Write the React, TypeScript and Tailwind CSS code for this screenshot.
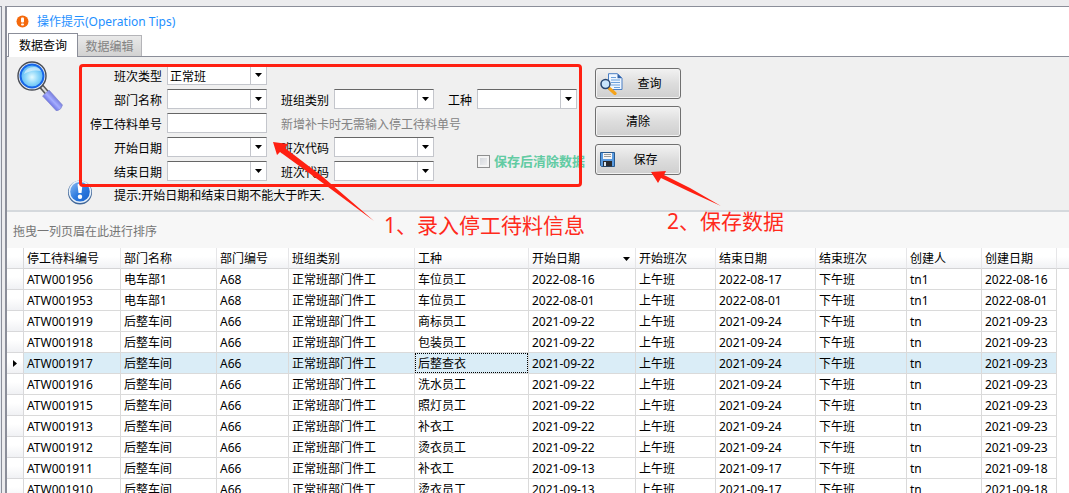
import { useState } from "react"
import type { ReactNode } from "react"

interface RecordRow {
    code: string
    dept: string
    deptNo: string
    group: string
    job: string
    startDate: string
    startShift: string
    endDate: string
    endShift: string
    creator: string
    createdAt: string
}

const columns: { key: keyof RecordRow; title: string; width: string }[] = [
    { key: "code", title: "停工待料编号", width: "w-[97px]" },
    { key: "dept", title: "部门名称", width: "w-[96px]" },
    { key: "deptNo", title: "部门编号", width: "w-[72px]" },
    { key: "group", title: "班组类别", width: "w-[126px]" },
    { key: "job", title: "工种", width: "w-[114px]" },
    { key: "startDate", title: "开始日期", width: "w-[107px]" },
    { key: "startShift", title: "开始班次", width: "w-[80px]" },
    { key: "endDate", title: "结束日期", width: "w-[100px]" },
    { key: "endShift", title: "结束班次", width: "w-[91px]" },
    { key: "creator", title: "创建人", width: "w-[75px]" },
    { key: "createdAt", title: "创建日期", width: "w-[75px]" },
]

function row(code: string, dept: string, deptNo: string, job: string, startDate: string, endDate: string, creator: string, createdAt: string): RecordRow {
    return { code, dept, deptNo, group: "正常班部门件工", job, startDate, startShift: "上午班", endDate, endShift: "下午班", creator, createdAt }
}

const records: RecordRow[] = [
    row("ATW001956", "电车部1", "A68", "车位员工", "2022-08-16", "2022-08-17", "tn1", "2022-08-16"),
    row("ATW001953", "电车部1", "A68", "车位员工", "2022-08-01", "2022-08-01", "tn1", "2022-08-01"),
    row("ATW001919", "后整车间", "A66", "商标员工", "2021-09-22", "2021-09-24", "tn", "2021-09-23"),
    row("ATW001918", "后整车间", "A66", "包装员工", "2021-09-22", "2021-09-24", "tn", "2021-09-23"),
    row("ATW001917", "后整车间", "A66", "后整查衣", "2021-09-22", "2021-09-24", "tn", "2021-09-23"),
    row("ATW001916", "后整车间", "A66", "洗水员工", "2021-09-22", "2021-09-24", "tn", "2021-09-23"),
    row("ATW001915", "后整车间", "A66", "照灯员工", "2021-09-22", "2021-09-24", "tn", "2021-09-23"),
    row("ATW001913", "后整车间", "A66", "补衣工", "2021-09-22", "2021-09-24", "tn", "2021-09-23"),
    row("ATW001912", "后整车间", "A66", "烫衣员工", "2021-09-22", "2021-09-24", "tn", "2021-09-23"),
    row("ATW001911", "后整车间", "A66", "补衣工", "2021-09-13", "2021-09-17", "tn", "2021-09-18"),
    row("ATW001910", "后整车间", "A66", "烫衣员工", "2021-09-13", "2021-09-17", "tn", "2021-09-18"),
]

function WarningIcon() {
    return (
        <svg width="13" height="13" viewBox="0 0 13 13" aria-hidden="true">
            <circle cx="6.5" cy="6.5" r="6" fill="#f4690c" />
            <rect x="5" y="2.5" width="3" height="5" rx="1" fill="#fff" />
            <rect x="5" y="8.5" width="3" height="2" rx="1" fill="#fff" />
        </svg>
    )
}

function MagnifierIcon() {
    return (
        <svg width="48" height="50" viewBox="0 0 48 50" aria-hidden="true">
            <defs>
                <radialGradient id="lens" cx="0.5" cy="0.55" r="0.55">
                    <stop offset="0" stopColor="#e4faff" />
                    <stop offset="0.5" stopColor="#8fd8fa" />
                    <stop offset="1" stopColor="#4fb0f2" />
                </radialGradient>
                <linearGradient id="handle" x1="0" y1="1" x2="1" y2="0">
                    <stop offset="0.25" stopColor="#4a4fd0" />
                    <stop offset="0.5" stopColor="#a5adff" />
                    <stop offset="0.8" stopColor="#4d50c0" />
                </linearGradient>
            </defs>
            <path d="M25 25l7 8" stroke="#555" strokeWidth="5" />
            <path d="M26 26l6 7" stroke="#ddd" strokeWidth="2" />
            <path d="M26.500 35l6.500-6L46.500 44q-1 5-6 6z" fill="url(#handle)" stroke="#8286c8" strokeWidth="0.6" />
            <circle cx="16" cy="15" r="14" fill="#e8eef6" stroke="#4a4d55" strokeWidth="1.400" />
            <circle cx="16" cy="15" r="11.500" fill="url(#lens)" stroke="#1766e8" strokeWidth="2" />
            <path d="M8 13q2-7 10-7 5 0 7 4-9-2-17 3z" fill="#fff" opacity="0.5" />
        </svg>
    )
}

function InfoIcon() {
    return (
        <svg width="26" height="26" viewBox="0 0 26 26" aria-hidden="true">
            <defs>
                <linearGradient id="info" x1="0" y1="0" x2="1" y2="1">
                    <stop offset="0" stopColor="#8cbcf2" />
                    <stop offset="0.5" stopColor="#2f7ce0" />
                    <stop offset="1" stopColor="#1560cc" />
                </linearGradient>
            </defs>
            <circle cx="13" cy="13.500" r="12" fill="#3f6699" />
            <circle cx="13" cy="12.800" r="11.300" fill="#e6f0fa" />
            <circle cx="13" cy="12.800" r="9.800" fill="url(#info)" />
            <path d="M10.500 5.500q2.500-2 5 0l-1 8.500h-3z" fill="#fff" />
            <circle cx="13" cy="17.800" r="2.200" fill="#fff" />
        </svg>
    )
}

function SearchDocIcon() {
    return (
        <svg width="23" height="22" viewBox="0 0 23 22" aria-hidden="true">
            <path d="M8.500 0.700h9l4.500 4.500v11.300H8.500z" fill="#eef6ff" stroke="#4a7fc4" />
            <path d="M17.500 0.700v4.500H22z" fill="#2d5fa6" />
            <path d="M11 4.500h5M11 7h9M11 9.500h9M11 12h9M14 14.500h6" stroke="#6ba0dc" />
            <path d="M9.500 15.500l5.500 5" stroke="#f5a31a" strokeWidth="3.200" strokeLinecap="round" />
            <circle cx="5.500" cy="11" r="4.500" fill="#c9e4fa" stroke="#26456f" strokeWidth="1.500" />
        </svg>
    )
}

function SaveIcon() {
    return (
        <svg width="15" height="15" viewBox="0 0 15 15" aria-hidden="true">
            <path d="M0.500 0.500h14v14h-13l-1-1z" fill="#5a9be0" stroke="#27598f" />
            <rect x="3" y="1" width="9" height="6" fill="#f6f6f6" />
            <path d="M4 2.500h7M4 4.500h7" stroke="#999" />
            <rect x="3" y="9" width="9" height="5.500" fill="#2a2c30" />
            <rect x="4" y="10" width="2" height="4" fill="#d8e4f0" />
        </svg>
    )
}

function ActionButton({ icon, children }: { icon?: ReactNode; children: ReactNode }) {
    return (
        <button
            type="button"
            className="flex h-[31px] w-[86px] items-center rounded-[3px] border border-[#707070] bg-linear-to-b from-[#f2f2f2] from-0% via-[#dddddd] via-50% to-[#cfcfcf] px-1 shadow-[inset_0_0_0_1px_#f3f3f3]"
        >
            {icon}
            <span className="flex-1 pt-px text-center">{children}</span>
        </button>
    )
}

interface SelectFieldProps {
    id: string
    label: string
    labelWidth?: string
    options?: string[]
}

function SelectField({ id, label, labelWidth = "", options = [""] }: SelectFieldProps) {
    return (
        <div className="flex h-5 items-center gap-[5px]">
            <label htmlFor={id} className={`${labelWidth} pt-1 text-right whitespace-nowrap`}>{label}</label>
            <div className="relative">
                <select
                    id={id}
                    className="block h-5 w-[100px] appearance-none border border-[#c4c6cc] border-t-[#666] bg-white pt-[3px] pr-4 pl-[2px] leading-4 outline-none"
                >
                    {options.map((o) => <option key={o}>{o}</option>)}
                </select>
                <span className="pointer-events-none absolute inset-y-px right-px flex w-4 items-center justify-center border-l border-[#c4c6cc]">
                    <svg width="7" height="4" viewBox="0 0 7 4" aria-hidden="true">
                        <path d="M0 0h7L3.500 4z" fill="#000" />
                    </svg>
                </span>
            </div>
        </div>
    )
}

// red frame, arrows and captions that explain the two steps
function Annotations() {
    return (
        <div className="pointer-events-none absolute inset-0 text-[21px] leading-6 text-[#ff2a1c]">
            <div className="absolute top-[7px] left-[72px] h-[123px] w-[503px] rounded-[4px] border-3 border-[#ff2012]" />
            <svg className="absolute top-0 left-0 overflow-visible" width="720" height="170" viewBox="0 0 720 170" aria-hidden="true">
                <path d="M266 85l15 2-3 4 38 29 51 44-54-40-40-29-3 3z" fill="#ff2012" />
                <path d="M644 115l15-1-2 4 26 13 31 18-33-15-27-13-3 5z" fill="#ff2012" />
            </svg>
            <p className="absolute top-[156px] left-[377px] whitespace-nowrap">1、录入停工待料信息</p>
            <p className="absolute top-[152px] left-[660px] whitespace-nowrap">2、保存数据</p>
        </div>
    )
}

function QueryForm() {
    return (
        <form className="relative flex h-[155px] border-b-2 border-[#d5d9dd] bg-[#f0f0f0]">
            <div className="flex w-[86px] shrink-0 flex-col justify-between pt-1 pb-[5px]">
                <div className="pl-[9px]"><MagnifierIcon /></div>
                <div className="self-end"><InfoIcon /></div>
            </div>
            <div className="-ml-[10px] flex w-[502px] shrink-0 flex-col gap-1 pt-2">
                <SelectField id="shiftType" label="班次类型" labelWidth="w-[79px]" options={["正常班"]} />
                <div className="flex gap-[14px]">
                    <SelectField id="dept" label="部门名称" labelWidth="w-[79px]" />
                    <SelectField id="group" label="班组类别" />
                    <SelectField id="job" label="工种" />
                </div>
                <div className="flex h-5 items-center gap-[5px]">
                    <label htmlFor="orderNo" className="w-[79px] pt-1 text-right">停工待料单号</label>
                    <input id="orderNo" type="text" className="h-5 w-[100px] border border-[#c4c6cc] border-t-[#666] bg-white px-[2px] outline-none" />
                    <span className="pt-1 pl-[9px] text-[#838383]">新增补卡时无需输入停工待料单号</span>
                </div>
                <div className="flex items-center">
                    <div className="flex flex-col gap-1">
                        <div className="flex gap-[14px]">
                            <SelectField id="startDate" label="开始日期" labelWidth="w-[79px]" />
                            <SelectField id="startShift" label="班次代码" />
                        </div>
                        <div className="flex gap-[14px]">
                            <SelectField id="endDate" label="结束日期" labelWidth="w-[79px]" />
                            <SelectField id="endShift" label="班次代码" />
                        </div>
                    </div>
                    <label className="ml-[43px] flex items-center gap-1 pt-1 text-[13px] font-bold whitespace-nowrap text-[#62cba3]">
                        <input type="checkbox" className="size-[13px] appearance-none border border-[#8e8f8f] bg-linear-to-br from-[#cfd3d9] to-[#f4f4f4] shadow-[inset_0_0_0_2px_#f4f4f4]" />
                        保存后清除数据
                    </label>
                </div>
                <p className="pt-[3px] pl-[31px]">提示:开始日期和结束日期不能大于昨天.</p>
            </div>
            <div className="flex flex-col gap-[7px] pt-[11px] pl-[10px]">
                <ActionButton icon={<SearchDocIcon />}>查询</ActionButton>
                <ActionButton>清除</ActionButton>
                <ActionButton icon={<SaveIcon />}>保存</ActionButton>
            </div>
            <Annotations />
        </form>
    )
}

function RecordTable() {
    const [selected, setSelected] = useState("ATW001917")

    return (
        <table className="w-full table-fixed border-separate border-spacing-0">
            <thead>
                <tr className="h-[21px] bg-linear-to-b from-white from-40% to-[#f0f1f4] text-left">
                    <th className="w-[17px] border-r border-b border-[#d8d8da] p-0" />
                    {columns.map((c) => (
                        <th key={c.key} className={`${c.width} border-r border-b border-r-[#e6e6e8] border-b-[#d4d4d6] p-0 pl-[3px] font-normal`}>
                            <div className="flex h-5 items-center justify-between pt-[2px] pr-[5px]">
                                {c.title}
                                {c.key === "startDate" && (
                                    <svg width="7" height="4" viewBox="0 0 7 4" aria-hidden="true">
                                        <path d="M0 0h7L3.500 4z" fill="#000" />
                                    </svg>
                                )}
                            </div>
                        </th>
                    ))}
                    <th className="border-b border-[#d4d4d6] p-0" />
                </tr>
            </thead>
            <tbody>
                {records.map((r) => {
                    const active = r.code === selected
                    return (
                        <tr key={r.code} className="h-[21px]" onClick={() => setSelected(r.code)}>
                            <td className="border-r border-b border-[#d8d8da] bg-linear-to-b from-white from-40% to-[#f0f1f4] p-0">
                                {active && (
                                    <svg className="mx-auto" width="4" height="7" viewBox="0 0 4 7" aria-hidden="true">
                                        <path d="M0 0l4 3.500L0 7z" fill="#000" />
                                    </svg>
                                )}
                            </td>
                            {columns.map((c) => (
                                <td key={c.key} className={`border-r border-b border-[#dadada] p-0 whitespace-nowrap ${active ? "bg-[#daedf7]" : "bg-white"}`}>
                                    <div className={`flex h-5 items-center pt-[2px] pl-[3px] ${active && c.key === "job" ? "outline-1 -outline-offset-1 outline-dotted outline-black" : ""}`}>
                                        {r[c.key]}
                                    </div>
                                </td>
                            ))}
                            <td className="p-0" />
                        </tr>
                    )
                })}
            </tbody>
        </table>
    )
}

export default function App() {
    return (
        <div className="flex h-screen overflow-hidden bg-[#ececee] pt-[6px] font-['Noto_Sans','Noto_Sans_CJK_SC',sans-serif] text-[12px] leading-4 text-black">
            <div className="mr-[3px] w-[2px] shrink-0 border-t border-r border-[#8b8e99] bg-[#e4e9f0]" />
            <main className="min-w-0 flex-1 border-t border-l-2 border-[#8b8e99] bg-white">
                <div className="flex h-[26px] items-center gap-2 pt-[3px] pl-[9px] text-[#1e90ff]">
                    <WarningIcon />
                    <span>操作提示(Operation Tips)</span>
                </div>
                <div role="tablist" className="flex h-6 items-end border-b border-[#8b8e99] pl-px">
                    <button type="button" role="tab" aria-selected="true" className="-mb-px h-6 w-[70px] border border-b-0 border-[#8b8e99] bg-white">
                        数据查询
                    </button>
                    <button type="button" role="tab" aria-selected="false" className="h-[21px] w-16 border border-b-0 border-l-0 border-[#b4b4b8] bg-linear-to-b from-[#e9e9e9] to-[#d2d2d2] pt-px text-[#838383]">
                        数据编辑
                    </button>
                </div>
                <QueryForm />
                <div className="flex h-9 items-center bg-[#f7f7f7] pt-[3px] pl-[6px] text-[#757575]">拖曳一列页眉在此进行排序</div>
                <RecordTable />
            </main>
        </div>
    )
}
